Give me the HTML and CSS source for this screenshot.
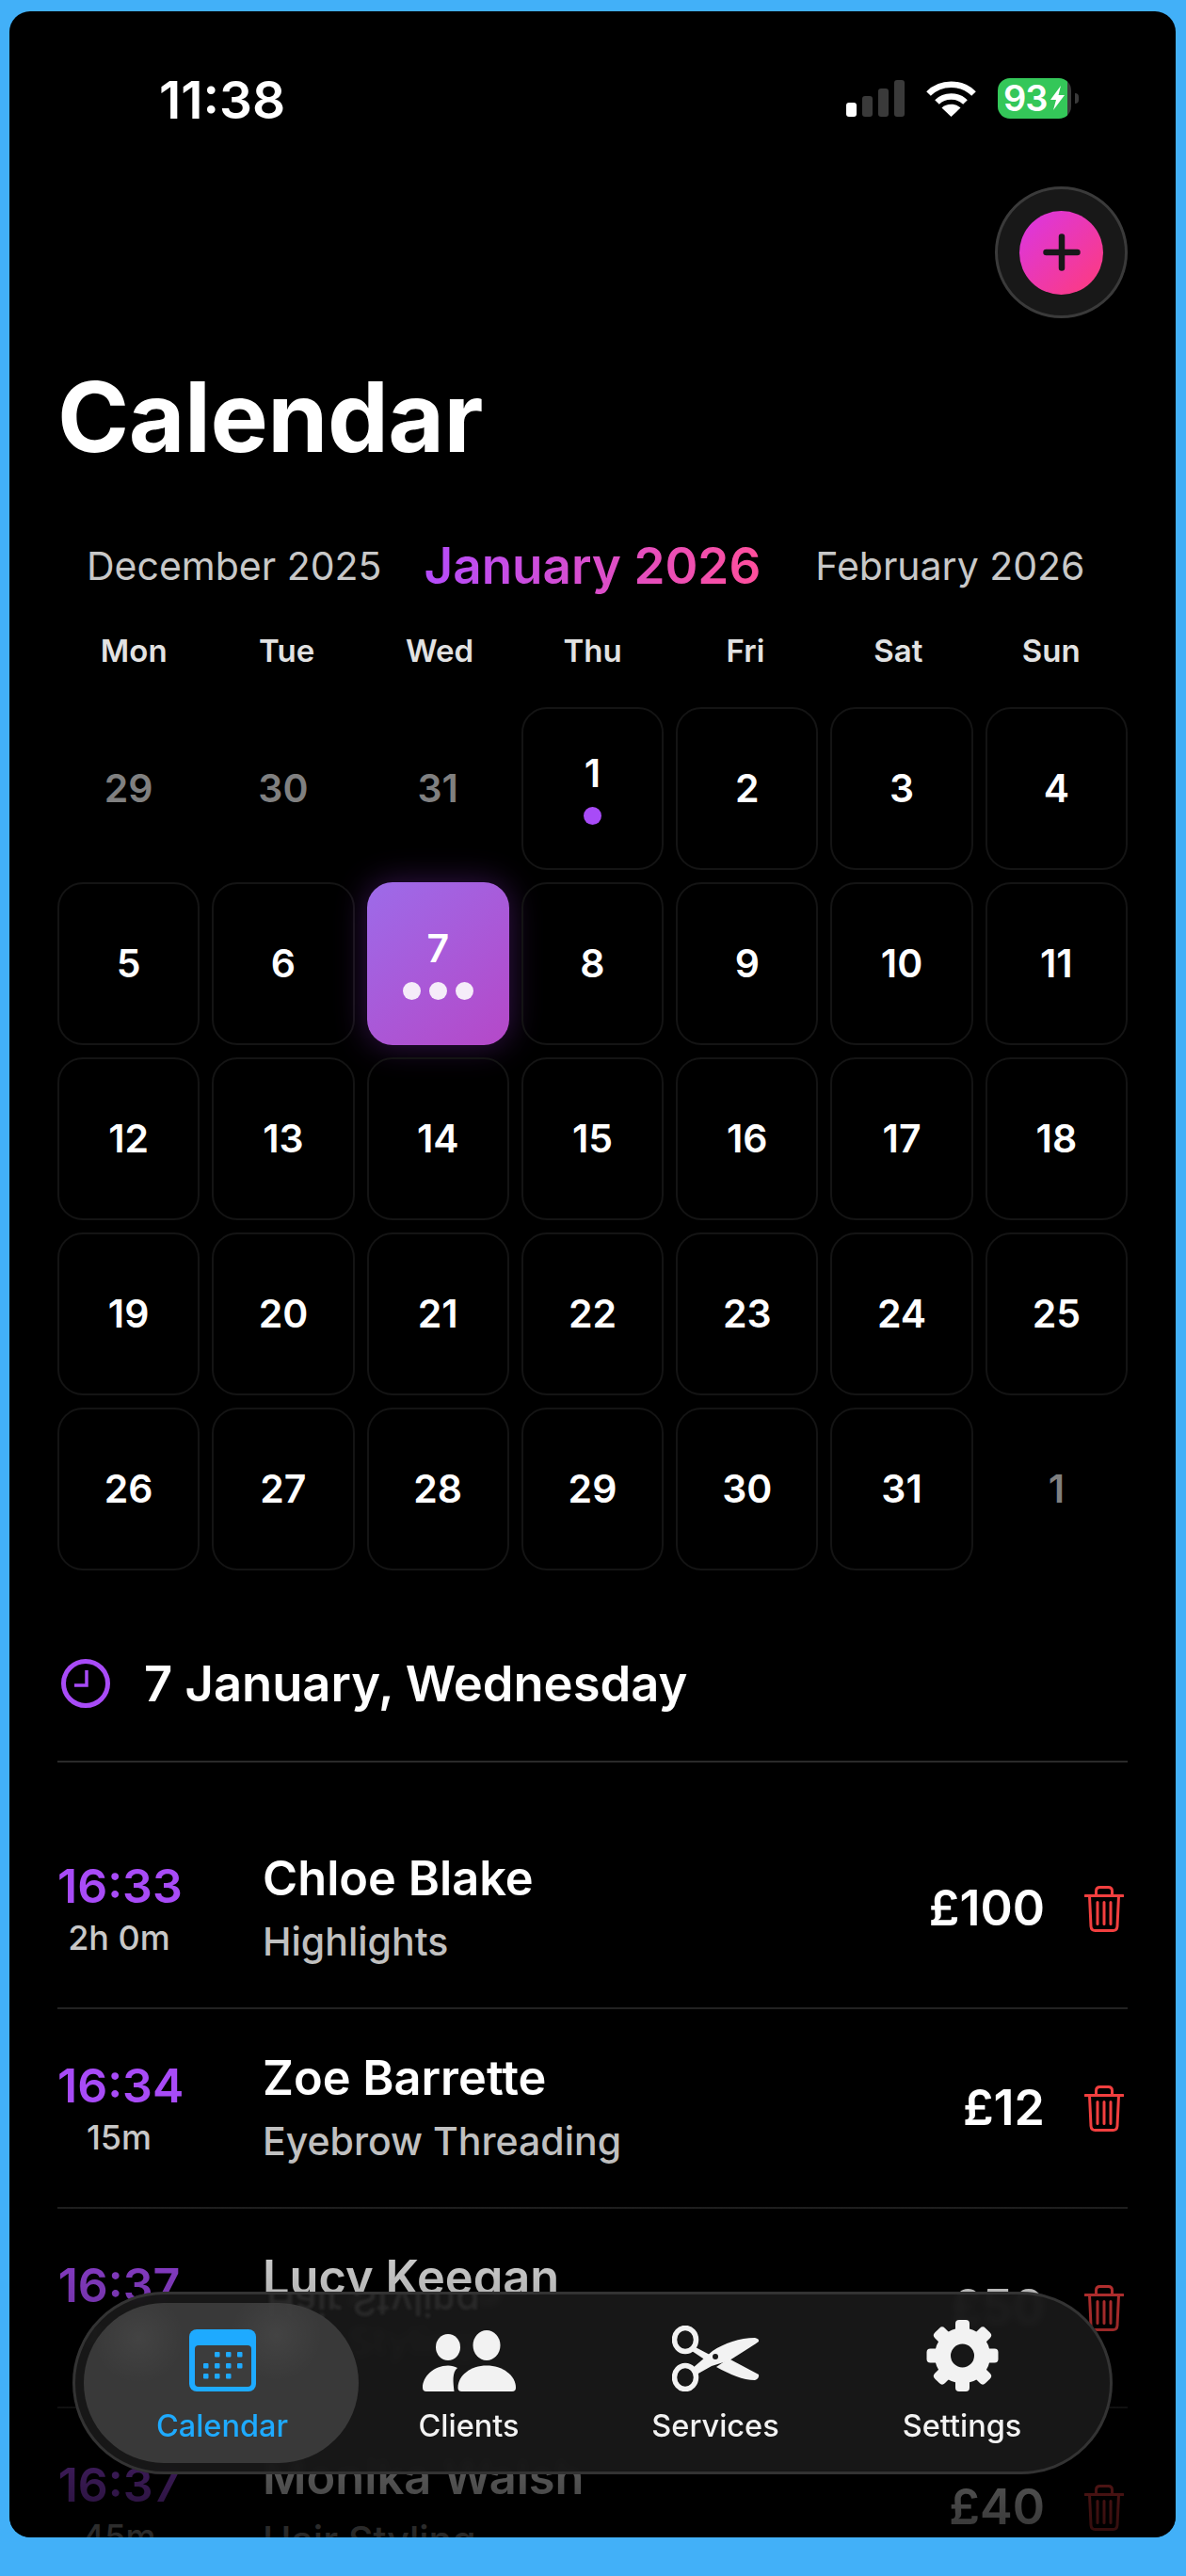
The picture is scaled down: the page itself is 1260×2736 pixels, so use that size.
FILE: index.html
```html
<!DOCTYPE html>
<html lang="en">
<head>
<meta charset="utf-8">
<title>Calendar</title>
<link rel="stylesheet" href="styles.css">
</head>
<body>
<main class="screen">
  <header class="status">
    <span class="clock-time">11:38</span>
    <div class="status-icons">
      <div class="signal"><i class="bar on b1"></i><i class="bar b2"></i><i class="bar b3"></i><i class="bar b4"></i></div>
      <svg class="wifi" viewBox="0 0 53 39"><path d="M2.5 14.5C15.5 1.5 37.5 1.500 50.500 14.500" fill="none" stroke="#fff" stroke-width="6.500"/><path d="M11.500 23.500C19.500 15.500 33.500 15.500 41.500 23.500" fill="none" stroke="#fff" stroke-width="6.500"/><path d="M26.500 39L16.500 29.500C21.500 24.500 31.500 24.500 36.500 29.500Z" fill="#fff"/></svg>
      <div class="battery"><div class="battery-body"><span class="battery-num">93</span><svg class="bolt" viewBox="0 0 15 26"><path d="M11 0L0 15H6L3 26L15 10H8.500Z" fill="#fff"/></svg></div><i class="battery-nub"></i></div>
    </div>
  </header>

  <div class="fab-row">
    <button class="fab"><span class="fab-inner"><svg class="plus" viewBox="0 0 40 40"><path d="M20 3.500V36.500M3.500 20H36.500" stroke="#181818" stroke-width="6.500" stroke-linecap="round"/></svg></span></button>
  </div>

  <h1 class="title">Calendar</h1>

  <div class="months">
    <span class="month">December 2025</span>
    <span class="month current">January 2026</span>
    <span class="month next">February 2026</span>
  </div>

  <div class="weekdays">
    <span>Mon</span><span>Tue</span><span>Wed</span><span>Thu</span><span>Fri</span><span>Sat</span><span>Sun</span>
  </div>

  <div class="grid">
    <div class="cell muted"><span>29</span></div>
    <div class="cell muted"><span>30</span></div>
    <div class="cell muted"><span>31</span></div>
    <div class="cell"><span>1</span><div class="dots"><i class="dot"></i></div></div>
    <div class="cell"><span>2</span></div>
    <div class="cell"><span>3</span></div>
    <div class="cell"><span>4</span></div>
    <div class="cell"><span>5</span></div>
    <div class="cell"><span>6</span></div>
    <div class="cell selected"><span>7</span><div class="dots"><i class="dot"></i><i class="dot"></i><i class="dot"></i></div></div>
    <div class="cell"><span>8</span></div>
    <div class="cell"><span>9</span></div>
    <div class="cell"><span>10</span></div>
    <div class="cell"><span>11</span></div>
    <div class="cell"><span>12</span></div>
    <div class="cell"><span>13</span></div>
    <div class="cell"><span>14</span></div>
    <div class="cell"><span>15</span></div>
    <div class="cell"><span>16</span></div>
    <div class="cell"><span>17</span></div>
    <div class="cell"><span>18</span></div>
    <div class="cell"><span>19</span></div>
    <div class="cell"><span>20</span></div>
    <div class="cell"><span>21</span></div>
    <div class="cell"><span>22</span></div>
    <div class="cell"><span>23</span></div>
    <div class="cell"><span>24</span></div>
    <div class="cell"><span>25</span></div>
    <div class="cell"><span>26</span></div>
    <div class="cell"><span>27</span></div>
    <div class="cell"><span>28</span></div>
    <div class="cell"><span>29</span></div>
    <div class="cell"><span>30</span></div>
    <div class="cell"><span>31</span></div>
    <div class="cell muted"><span>1</span></div>
  </div>

  <div class="day-head">
    <svg class="day-clock" viewBox="0 0 52 52"><circle cx="26" cy="26" r="23.500" fill="none" stroke="#a84bf7" stroke-width="5"/><path d="M27 12V28H14" fill="none" stroke="#a84bf7" stroke-width="3.500"/></svg>
    <h2 class="day-title">7 January, Wednesday</h2>
  </div>

  <section class="list">
    <article class="row">
      <div class="when"><div class="time">16:33</div><div class="dur">2h 0m</div></div>
      <div class="who"><div class="name">Chloe Blake</div><div class="service">Highlights</div></div>
      <div class="price">£100</div>
      <svg class="trash" viewBox="0 0 42 49"><path d="M1 10.500H41M12.500 10V5.500Q12.500 1.500 16.500 1.500H25.500Q29.500 1.500 29.500 5.500V10M5.500 10.500L7 43Q7.300 47.500 11.500 47.500H30.500Q34.700 47.500 35 43L36.500 10.500M14 17.500V40.500M21 17.500V40.500M28 17.500V40.500" fill="none" stroke="#f23f3f" stroke-width="3" stroke-linecap="round"/></svg>
    </article>
    <article class="row">
      <div class="when"><div class="time">16:34</div><div class="dur">15m</div></div>
      <div class="who"><div class="name">Zoe Barrette</div><div class="service">Eyebrow Threading</div></div>
      <div class="price">£12</div>
      <svg class="trash" viewBox="0 0 42 49"><path d="M1 10.500H41M12.500 10V5.500Q12.500 1.500 16.500 1.500H25.500Q29.500 1.500 29.500 5.500V10M5.500 10.500L7 43Q7.300 47.500 11.500 47.500H30.500Q34.700 47.500 35 43L36.500 10.500M14 17.500V40.500M21 17.500V40.500M28 17.500V40.500" fill="none" stroke="#f23f3f" stroke-width="3" stroke-linecap="round"/></svg>
    </article>
    <article class="row">
      <div class="when"><div class="time">16:37</div><div class="dur">45m</div></div>
      <div class="who"><div class="name">Lucy Keegan</div><div class="service">Hair Styling</div></div>
      <div class="price">£50</div>
      <svg class="trash" viewBox="0 0 42 49"><path d="M1 10.500H41M12.500 10V5.500Q12.500 1.500 16.500 1.500H25.500Q29.500 1.500 29.500 5.500V10M5.500 10.500L7 43Q7.300 47.500 11.500 47.500H30.500Q34.700 47.500 35 43L36.500 10.500M14 17.500V40.500M21 17.500V40.500M28 17.500V40.500" fill="none" stroke="#f23f3f" stroke-width="3" stroke-linecap="round"/></svg>
    </article>
    <article class="row">
      <div class="when"><div class="time">16:37</div><div class="dur">45m</div></div>
      <div class="who"><div class="name">Monika Walsh</div><div class="service">Hair Styling</div></div>
      <div class="price">£40</div>
      <svg class="trash" viewBox="0 0 42 49"><path d="M1 10.500H41M12.500 10V5.500Q12.500 1.500 16.500 1.500H25.500Q29.500 1.500 29.500 5.500V10M5.500 10.500L7 43Q7.300 47.500 11.500 47.500H30.500Q34.700 47.500 35 43L36.500 10.500M14 17.500V40.500M21 17.500V40.500M28 17.500V40.500" fill="none" stroke="#f23f3f" stroke-width="3" stroke-linecap="round"/></svg>
    </article>
  </section>

  <div class="fade"></div>

  <nav class="nav">
    <div class="tab active">
      <svg class="tab-icon" width="71" height="66" viewBox="0 0 71 66"><rect width="71" height="66" rx="8" fill="#1eaaff"/><rect x="6" y="17" width="60" height="44" rx="4" fill="#3c3c3c"/><g fill="#1eaaff"><rect x="27" y="24" width="5.500" height="5.500" rx="1"/><rect x="39" y="24" width="5.500" height="5.500" rx="1"/><rect x="51" y="24" width="5.500" height="5.500" rx="1"/><rect x="15" y="36" width="5.500" height="5.500" rx="1"/><rect x="27" y="36" width="5.500" height="5.500" rx="1"/><rect x="39" y="36" width="5.500" height="5.500" rx="1"/><rect x="51" y="36" width="5.500" height="5.500" rx="1"/><rect x="15" y="47" width="5.500" height="5.500" rx="1"/><rect x="27" y="47" width="5.500" height="5.500" rx="1"/><rect x="39" y="47" width="5.500" height="5.500" rx="1"/></g></svg>
      <span class="tab-label">Calendar</span>
    </div>
    <div class="tab">
      <svg class="tab-icon" width="99" height="66" viewBox="0 0 99 66" fill="#f2f2f2"><ellipse cx="27" cy="19" rx="13" ry="14"/><ellipse cx="68" cy="17" rx="14.500" ry="16"/><path d="M37.500 62C37.500 49 51 38.500 68 38.500C85 38.500 99 49 99 62Q99 66 95 66H41.500Q37.500 66 37.500 62Z"/><path d="M0 62C0 50 12 38.500 27 38.500C31 38.500 34 39.500 37 41C31 46 32.500 56 33.500 66H4Q0 66 0 62Z"/></svg>
      <span class="tab-label">Clients</span>
    </div>
    <div class="tab">
      <svg class="tab-icon" width="93" height="70" viewBox="0 0 93 70" fill="#f2f2f2"><ellipse cx="14" cy="15" rx="11.500" ry="12.500" fill="none" stroke="#f2f2f2" stroke-width="5.500"/><ellipse cx="14" cy="55" rx="11.500" ry="12.500" fill="none" stroke="#f2f2f2" stroke-width="5.500"/><path d="M23 22L40 31L36 37L21 27Z"/><path d="M22 45L43 27C55 19 72 13 88 13Q93 14 92 17Q88 20 61 37L42 43L26 52Z"/><path d="M47 44L60 35L92 52Q93 56 88 58C75 58 62 52 47 44Z"/><circle cx="46" cy="33" r="3" fill="#181818"/></svg>
      <span class="tab-label">Services</span>
    </div>
    <div class="tab">
      <svg class="tab-icon" width="77" height="76" viewBox="0 0 77 76" fill="#f2f2f2"><circle cx="38.500" cy="38" r="21" fill="none" stroke="#f2f2f2" stroke-width="17"/><g><rect x="31" y="0" width="15" height="18" rx="4"/><rect x="31" y="0" width="15" height="18" rx="4" transform="rotate(45 38.500 38)"/><rect x="31" y="0" width="15" height="18" rx="4" transform="rotate(90 38.500 38)"/><rect x="31" y="0" width="15" height="18" rx="4" transform="rotate(135 38.500 38)"/><rect x="31" y="0" width="15" height="18" rx="4" transform="rotate(180 38.500 38)"/><rect x="31" y="0" width="15" height="18" rx="4" transform="rotate(225 38.500 38)"/><rect x="31" y="0" width="15" height="18" rx="4" transform="rotate(270 38.500 38)"/><rect x="31" y="0" width="15" height="18" rx="4" transform="rotate(315 38.500 38)"/></g></svg>
      <span class="tab-label">Settings</span>
    </div>
  </nav>
</main>
</body>
</html>
```
FILE: styles.css
```css
* { box-sizing: border-box; }
html, body { margin: 0; padding: 0; }
body {
  width: 1260px;
  height: 2736px;
  background: #42b0f8;
  padding: 12px 11px 41px 10px;
  font-family: Inter, "Noto Sans", sans-serif;
  color: #fff;
  overflow: hidden;
}
.screen {
  position: relative;
  height: 2683px;
  background: #000;
  border-radius: 22px;
  overflow: hidden;
  padding: 0 51px 0 51px;
}
.status {
  height: 187px;
  margin: 0 -51px 0 -51px;
  padding: 0 103px 0 159px;
  display: flex;
  align-items: center;
  justify-content: space-between;
}
.clock-time { font-size: 55px; font-weight: 600; line-height: 60px; letter-spacing: 0; }
.status-icons { display: flex; align-items: center; gap: 23px; margin-top: -3px; }
.signal { display: flex; align-items: flex-end; gap: 6px; height: 39px; }
.bar { display: block; width: 11px; background: #3a3a3a; border-radius: 3px; }
.bar.on { background: #fff; }
.b1 { height: 15px; }
.b2 { height: 22px; }
.b3 { height: 30px; }
.b4 { height: 39px; }
.wifi { width: 53px; height: 39px; display: block; }
.battery { display: flex; align-items: center; gap: 4px; }
.battery-body {
  width: 78px;
  height: 43px;
  border-radius: 13px;
  background: linear-gradient(90deg, #34c759 0 95%, #3a3a3a 95%);
  display: flex;
  align-items: center;
  padding-left: 6px;
  gap: 4px;
}
.battery-num { font-size: 38px; font-weight: 600; line-height: 43px; letter-spacing: -1px; }
.bolt { width: 15px; height: 26px; display: block; }
.battery-nub { display: block; width: 4px; height: 11px; background: #3a3a3a; border-radius: 0 4px 4px 0; }

.fab-row { display: flex; justify-content: flex-end; height: 140px; margin-top: -1px; }
.fab {
  width: 141px;
  height: 140px;
  padding: 0;
  border-radius: 50%;
  border: 3px solid #3a3a3a;
  background: #181818;
  display: flex;
  align-items: center;
  justify-content: center;
}
.fab-inner {
  width: 89px;
  height: 89px;
  border-radius: 50%;
  background: linear-gradient(135deg, #d936e6, #ff3b7a);
  display: flex;
  align-items: center;
  justify-content: center;
}
.plus { width: 40px; height: 40px; display: block; }

.title { margin: 45px 0 0; font-size: 103px; font-weight: 700; line-height: 120px; letter-spacing: -0.5px; }

.months { display: flex; align-items: center; height: 60px; margin-top: 68px; padding-left: 31px; gap: 45px; }
.month { font-size: 41px; font-weight: 400; color: #c8c8c8; line-height: 60px; white-space: nowrap; }
.month.current {
  font-size: 53px;
  font-weight: 600;
  background: linear-gradient(90deg, #b44cfb, #ff4f9c);
  -webkit-background-clip: text;
  background-clip: text;
  color: transparent;
}
.month.next { margin-left: 13px; }

.weekdays { display: grid; grid-template-columns: repeat(7, 1fr); margin-top: 40px; }
.weekdays span { text-align: center; font-size: 33px; font-weight: 600; line-height: 40px; color: #e2e2e2; }

.grid { display: grid; grid-template-columns: repeat(7, 1fr); grid-auto-rows: 173px; gap: 13px; margin-top: 40px; }
.cell {
  border: 2px solid #141414;
  border-radius: 27px;
  display: flex;
  flex-direction: column;
  align-items: center;
  justify-content: center;
  font-size: 41px;
  font-weight: 600;
  line-height: 48px;
}
.cell > span { margin-top: -2px; }
.cell.muted { border-color: transparent; color: #808080; }
.cell.selected {
  border: 0;
  background: linear-gradient(140deg, #9d6be9, #b548c8);
  box-shadow: 0 0 34px rgba(165, 60, 235, 0.32);
}
.dots { display: flex; gap: 9px; margin-top: 12px; }
.dot { display: block; width: 19px; height: 19px; border-radius: 50%; background: #a84bf7; }
.selected .dot { background: #f5ecf9; }

.day-head {
  display: flex;
  align-items: center;
  gap: 36px;
  margin-top: 95px;
  height: 109px;
  padding: 0 0 57px 4px;
  border-bottom: 2px solid #2a2a2a;
}
.day-clock { width: 52px; height: 52px; display: block; flex: none; }
.day-title { margin: 0; font-size: 52.5px; font-weight: 600; line-height: 52px; }

.list { margin-top: 50px; }
.row {
  height: 212px;
  border-bottom: 2px solid #222;
  display: flex;
  align-items: center;
  padding-right: 4px;
}
.when { width: 131px; margin-right: 87px; text-align: center; flex: none; }
.time { font-size: 50px; font-weight: 600; line-height: 58px; color: #a84bf7; white-space: nowrap; }
.dur { font-size: 36px; font-weight: 500; line-height: 44px; margin-top: 4px; color: #c8c8c8; }
.who { flex: 1; }
.name { font-size: 50.5px; font-weight: 600; line-height: 56px; }
.service { font-size: 41px; font-weight: 500; line-height: 50px; margin-top: 14px; color: #c0c0c0; }
.price { font-size: 52px; font-weight: 600; line-height: 60px; margin-right: 42px; }
.trash { width: 42px; height: 49px; display: block; flex: none; }

.fade {
  position: absolute;
  left: 0;
  right: 0;
  bottom: 0;
  height: 404px;
  background: linear-gradient(180deg, rgba(0,0,0,0), rgba(0,0,0,0.8));
  pointer-events: none;
}

.nav {
  position: absolute;
  left: 67px;
  bottom: 67px;
  width: 1105px;
  height: 194px;
  border-radius: 97px;
  border: 3px solid #333;
  background: rgba(24, 24, 24, 0.955);
  backdrop-filter: blur(4px);
  display: grid;
  grid-template-columns: repeat(4, 262px);
  padding: 0 25px;
  overflow: hidden;
}
.nav::after {
  content: "Hair Styling";
  position: absolute;
  left: 203px;
  top: -17px;
  font-size: 41px;
  font-weight: 500;
  line-height: 50px;
  color: #8a8a8a;
  opacity: 0.17;
  filter: blur(1.5px);
  transform: scaleY(-1);
}
.tab {
  position: relative;
  z-index: 1;
  display: flex;
  flex-direction: column;
  align-items: center;
  justify-content: flex-end;
  padding-bottom: 28px;
}
.tab.active::before {
  content: "";
  position: absolute;
  left: -16px;
  right: -14px;
  top: 9px;
  bottom: 9px;
  border-radius: 85px;
  background:
    radial-gradient(circle at 20% 22%, rgba(255,255,255,.05), transparent 18%),
    radial-gradient(circle at 70% 20%, rgba(255,255,255,.05), transparent 20%),
    rgba(60, 60, 60, 0.94);
}
.tab-icon { position: relative; display: block; margin-bottom: 17px; }
.tab-label { position: relative; font-size: 32.5px; font-weight: 500; line-height: 40px; color: #f2f2f2; white-space: nowrap; }
.active .tab-label { color: #1eaaff; }
```
